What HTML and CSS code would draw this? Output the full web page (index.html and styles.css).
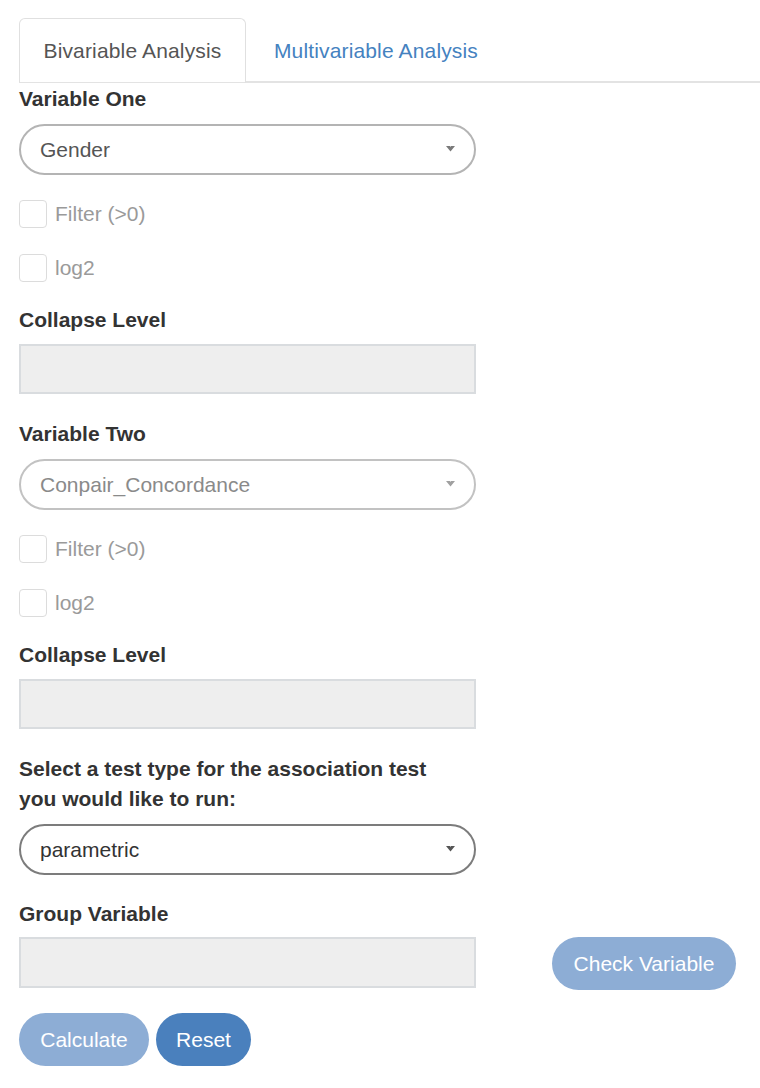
FILE: index.html
```html
<!DOCTYPE html>
<html>
<head>
<meta charset="utf-8">
<link rel="stylesheet" href="styles.css">
</head>
<body>
<div class="page">
  <ul class="tabs">
    <li class="tab active">Bivariable Analysis</li>
    <li class="tab link">Multivariable Analysis</li>
  </ul>
  <div class="content">
    <div class="label first">Variable One</div>
    <div class="select sel-a"><span>Gender</span><svg class="caret" width="9" height="6" viewBox="0 0 9 6"><path d="M0 0 L4 0 L4.5 1 L5 0 L9 0 L4.5 5.5 Z"/></svg></div>
    <div class="check"><span class="box"></span><span class="ctext">Filter (&gt;0)</span></div>
    <div class="check"><span class="box"></span><span class="ctext">log2</span></div>
    <div class="label after-check">Collapse Level</div>
    <div class="input"></div>
    <div class="label after-ctrl">Variable Two</div>
    <div class="select sel-b"><span>Conpair_Concordance</span><svg class="caret" width="9" height="6" viewBox="0 0 9 6"><path d="M0 0 L4 0 L4.5 1 L5 0 L9 0 L4.5 5.5 Z"/></svg></div>
    <div class="check"><span class="box"></span><span class="ctext">Filter (&gt;0)</span></div>
    <div class="check"><span class="box"></span><span class="ctext">log2</span></div>
    <div class="label after-check">Collapse Level</div>
    <div class="input"></div>
    <div class="label after-ctrl two-line">Select a test type for the association test<br>you would like to run:</div>
    <div class="select sel-c"><span>parametric</span><svg class="caret" width="9" height="6" viewBox="0 0 9 6"><path d="M0 0 L4 0 L4.5 1 L5 0 L9 0 L4.5 5.5 Z"/></svg></div>
    <div class="label group-label">Group Variable</div>
    <div class="group-row">
      <div class="input"></div>
      <button class="btn light check-btn">Check Variable</button>
    </div>
    <div class="actions">
      <button class="btn light">Calculate</button>
      <button class="btn dark">Reset</button>
    </div>
  </div>
</div>
</body>
</html>
```

FILE: styles.css
```css
* { box-sizing: border-box; }
html, body { margin: 0; padding: 0; background: #fff; }
body {
  font-family: "Liberation Sans", Helvetica, Arial, sans-serif;
  font-size: 21px;
  color: #333;
}
.page { padding-top: 18px; }
.tabs {
  list-style: none;
  margin: 0 0 0 19px;
  padding: 0;
  display: flex;
  border-bottom: 2px solid #e3e3e3;
}
.tab {
  line-height: 30px;
  padding: 17px 23.5px 16px;
  margin-bottom: -2px;
  border: 1.5px solid transparent;
  border-radius: 6px 6px 0 0;
  letter-spacing: 0.15px;
}
.tab.active {
  color: #555;
  border-color: #e0e0e0;
  border-bottom-color: #e3e3e3;
  background: #fff;
}
.tab.link {
  color: #4582bf;
  margin-left: 3px;
  padding-left: 24px;
}
.content { padding-left: 19px; padding-right: 24px; }
.label {
  font-weight: bold;
  line-height: 30px;
  color: #333;
  margin: 0 0 10px;
}
.label.first { margin-top: 1px; }
.label.after-check { margin-top: 22px; margin-bottom: 9px; }
.label.after-ctrl { margin-top: 25px; }
.label.two-line { line-height: 29.5px; margin-bottom: 11px; }
.label.group-label { margin-top: 24px; margin-bottom: 8px; }
.select {
  width: 457px;
  height: 51px;
  border: 2px solid #b4b4b4;
  border-radius: 26px;
  display: flex;
  align-items: center;
  justify-content: space-between;
  padding: 0 19px 0 19px;
  color: #555;
}
.select span { line-height: 30px; }
.caret { fill: #7a7a7a; margin-top: -2px; }
.sel-b { border-color: #c2c2c2; color: #8a8a8a; }
.sel-b .caret { fill: #a0a0a0; }
.sel-c { border-color: #7c7c7c; color: #333; }
.sel-c .caret { fill: #555; }
.check {
  display: flex;
  align-items: center;
  height: 30px;
  margin-top: 24px;
}
.box {
  width: 28px;
  height: 28px;
  border: 1.5px solid #dcdcdc;
  border-radius: 4px;
  background: #fff;
  margin-right: 8px;
}
.ctext { color: #9a9a9a; line-height: 30px; }
.input {
  width: 457px;
  height: 50px;
  background: #eeeeee;
  border: 2px solid #d9dcdf;
}
.group-row {
  display: flex;
  justify-content: space-between;
  align-items: flex-start;
}
.group-row .input { height: 51px; }
.btn {
  font-family: "Liberation Sans", Helvetica, Arial, sans-serif;
  font-size: 21px;
  color: #fff;
  border: none;
  border-radius: 27px;
  height: 53px;
  padding: 0 21px;
  line-height: 30px;
  cursor: pointer;
}
.btn.light { background: #8dadd5; }
.btn.dark { background: #4a80bd; }
.check-btn { width: 184px; padding: 0; }
.actions {
  display: flex;
  gap: 7px;
  margin-top: 23px;
}
.actions .btn.light { width: 130px; padding: 0; }
.actions .btn.dark { width: 95px; padding: 0; }
```
